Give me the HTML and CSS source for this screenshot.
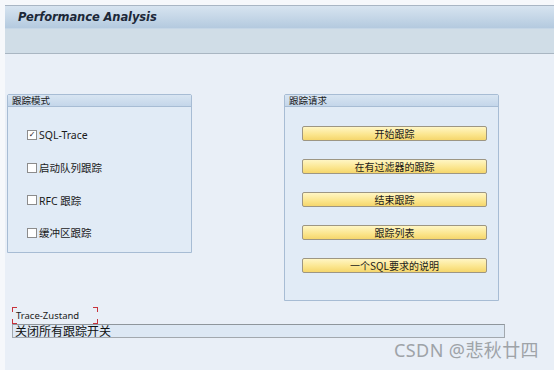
FILE: index.html
```html
<!DOCTYPE html>
<html>
<head>
<meta charset="utf-8">
<link rel="stylesheet" href="styles.css">
</head>
<body>
<div class="screen">
  <div class="titlebar"><span class="title">Performance Analysis</span></div>
  <div class="toolbar"></div>
  <div class="content">
    <div class="groups">
      <div class="group group-mode">
        <div class="group-head">跟踪模式</div>
        <div class="group-body checks">
          <label class="check"><span class="box checked">✓</span><span>SQL-Trace</span></label>
          <label class="check"><span class="box"></span><span>启动队列跟踪</span></label>
          <label class="check"><span class="box"></span><span>RFC 跟踪</span></label>
          <label class="check"><span class="box"></span><span>缓冲区跟踪</span></label>
        </div>
      </div>
      <div class="group group-req">
        <div class="group-head">跟踪请求</div>
        <div class="group-body buttons">
          <div class="btn">开始跟踪</div>
          <div class="btn">在有过滤器的跟踪</div>
          <div class="btn">结束跟踪</div>
          <div class="btn">跟踪列表</div>
          <div class="btn">一个SQL要求的说明</div>
        </div>
      </div>
    </div>
    <div class="status">
      <div class="status-label"><span class="corner tl"></span><span class="corner tr"></span><span class="corner bl"></span><span class="corner br"></span>Trace-Zustand</div>
      <div class="status-field">关闭所有跟踪开关</div>
    </div>
    <div class="watermark">CSDN @悲秋廿四</div>
  </div>
</div>
</body>
</html>
```

FILE: styles.css
```css
html, body {
  margin: 0;
  padding: 0;
  background: #f6f8fb;
  width: 554px;
  height: 370px;
  overflow: hidden;
  font-family: "Noto Sans", "Noto Sans CJK SC", sans-serif;
}
.screen {
  margin: 5px 0 0 5px;
  height: 365px;
  display: flex;
  flex-direction: column;
}
.titlebar {
  height: 22px;
  border-top: 1px solid #a9b6c4;
  background: linear-gradient(#d7e4f0, #b4cadf);
  display: flex;
  align-items: center;
}
.title {
  font-family: "DejaVu Sans", sans-serif;
  font-weight: bold;
  font-style: italic;
  font-size: 11.5px;
  color: #1c2838;
  padding-left: 13px;
  letter-spacing: -0.1px;
}
.toolbar {
  height: 24px;
  border-top: 1px solid #c5d6e6;
  border-bottom: 1px solid #a9b6c2;
  background: #d0dde7;
}
.content {
  flex: 1;
  background: #e9eff7;
  position: relative;
}
.groups {
  display: flex;
  align-items: flex-start;
  padding: 40px 0 0 2px;
  gap: 92px;
}
.group {
  border: 1px solid #a7bcd4;
  border-radius: 2px 2px 0 0;
  background: #e1ebf6;
  display: flex;
  flex-direction: column;
  box-sizing: border-box;
}
.group-mode { width: 185px; height: 159px; }
.group-req { width: 215px; height: 207px; }
.group-head {
  height: 11px;
  line-height: 11px;
  font-family: "Noto Sans CJK SC", sans-serif;
  font-size: 9.5px;
  color: #1a1a1a;
  padding-left: 4px;
  background: linear-gradient(#d8e5f2, #c4d6ea);
  border-bottom: 1px solid #a7bcd4;
}
.checks {
  display: flex;
  flex-direction: column;
  padding: 22px 0 0 19px;
  gap: 20.5px;
}
.check {
  display: flex;
  align-items: center;
  height: 12px;
  font-size: 10.5px;
  color: #1a1a1a;
  gap: 2px;
}
.check span:last-child { font-family: "Noto Sans", "Noto Sans CJK SC", sans-serif; }
.box {
  width: 8px;
  height: 8px;
  border: 1px solid #8c8c8c;
  background: #ffffff;
  font-size: 8px;
  line-height: 8px;
  text-align: center;
  color: #222;
  font-family: "DejaVu Sans", sans-serif;
}
.buttons {
  display: flex;
  flex-direction: column;
  padding: 19px 0 0 17px;
  gap: 18px;
}
.btn {
  width: 185px;
  height: 15px;
  box-sizing: border-box;
  border: 1px solid #9d9683;
  border-radius: 2px;
  background: linear-gradient(#fff6c4, #fbe58c 60%, #f5d66c);
  font-family: "Noto Sans CJK SC", sans-serif;
  font-size: 10px;
  line-height: 13px;
  text-align: center;
  color: #1a1a1a;
}
.status {
  padding: 6px 0 0 7px;
  display: flex;
  flex-direction: column;
}
.status-label {
  position: relative;
  width: 86px;
  height: 17px;
  box-sizing: border-box;
  padding: 3px 0 0 4px;
  font-size: 9.5px;
  line-height: 12px;
  color: #1a1a1a;
}
.corner {
  position: absolute;
  width: 4px;
  height: 4px;
  border-color: #c8323c;
  border-style: solid;
  border-width: 0;
}
.tl { left: 0; top: 0; border-top-width: 1px; border-left-width: 1px; }
.tr { right: 0; top: 0; border-top-width: 1px; border-right-width: 1px; }
.bl { left: 0; bottom: 0; border-bottom-width: 1px; border-left-width: 1px; }
.br { right: 0; bottom: 0; border-bottom-width: 1px; border-right-width: 1px; }
.status-field {
  width: 493px;
  height: 14px;
  box-sizing: border-box;
  border: 1px solid #a2a8ae;
  border-top-color: #8f969c;
  background: #dde8f4;
  font-family: "Noto Sans CJK SC", sans-serif;
  font-size: 12px;
  line-height: 11px;
  padding-left: 2px;
  color: #111;
  letter-spacing: 0px;
}
.watermark {
  position: absolute;
  right: 15px;
  top: 282px;
  font-family: "Noto Sans", "Noto Sans CJK SC", sans-serif;
  font-size: 18px;
  color: #9ea3a8;
  letter-spacing: 0.4px;
}
```
